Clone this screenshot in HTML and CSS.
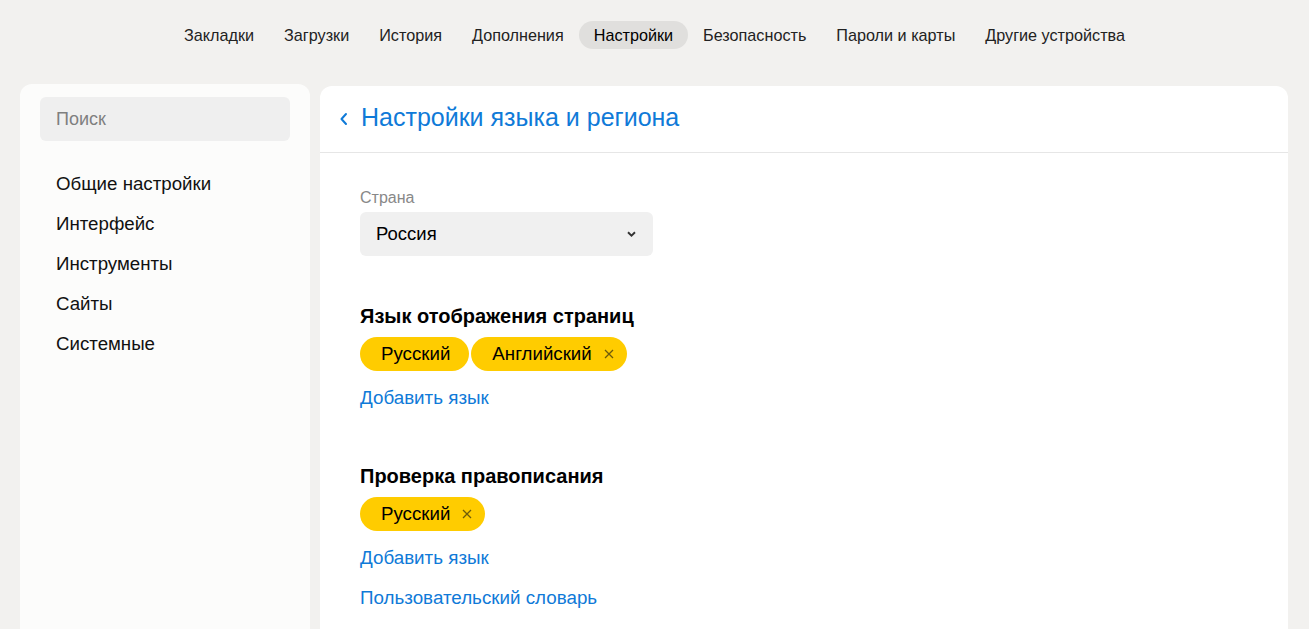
FILE: index.html
```html
<!DOCTYPE html>
<html lang="ru">
<head>
<meta charset="utf-8">
<title>Настройки</title>
<link rel="stylesheet" href="styles.css">
</head>
<body>
<nav class="topnav">
  <a class="tab">Закладки</a>
  <a class="tab">Загрузки</a>
  <a class="tab">История</a>
  <a class="tab">Дополнения</a>
  <a class="tab active">Настройки</a>
  <a class="tab">Безопасность</a>
  <a class="tab">Пароли и карты</a>
  <a class="tab">Другие устройства</a>
</nav>
<div class="layout">
  <aside class="sidebar">
    <div class="search">Поиск</div>
    <ul class="menu">
      <li>Общие настройки</li>
      <li>Интерфейс</li>
      <li>Инструменты</li>
      <li>Сайты</li>
      <li>Системные</li>
    </ul>
  </aside>
  <main class="panel">
    <header class="panel-head">
      <svg class="back" width="10" height="14" viewBox="0 0 10 14"><path d="M7 2 L2.5 7 L7 12" fill="none" stroke="#0f7ad8" stroke-width="2" stroke-linecap="round" stroke-linejoin="round"/></svg>
      <h1>Настройки языка и региона</h1>
    </header>
    <div class="panel-body">
      <div class="field-label">Страна</div>
      <div class="select">
        <span>Россия</span>
        <svg width="11" height="8" viewBox="0 0 11 8"><path d="M2 2.2 L5.5 5.6 L9 2.2" fill="none" stroke="#333" stroke-width="1.9" stroke-linecap="butt" stroke-linejoin="miter"/></svg>
      </div>

      <section class="group">
        <h2>Язык отображения страниц</h2>
        <div class="chips">
          <span class="chip">Русский</span>
          <span class="chip">Английский<svg class="x" width="10" height="10" viewBox="0 0 10 10"><path d="M1 1 L9 9 M9 1 L1 9" stroke="#6e5b0a" stroke-width="1.3" fill="none"/></svg></span>
        </div>
        <a class="link">Добавить язык</a>
      </section>

      <section class="group">
        <h2>Проверка правописания</h2>
        <div class="chips">
          <span class="chip">Русский<svg class="x" width="10" height="10" viewBox="0 0 10 10"><path d="M1 1 L9 9 M9 1 L1 9" stroke="#6e5b0a" stroke-width="1.3" fill="none"/></svg></span>
        </div>
        <a class="link">Добавить язык</a>
        <a class="link">Пользовательский словарь</a>
      </section>
    </div>
  </main>
</div>
</body>
</html>
```
FILE: styles.css
```css
* { box-sizing: border-box; }
html, body { margin: 0; padding: 0; }
body {
  background: #f2f1ef;
  font-family: "Liberation Sans", Arial, sans-serif;
  color: #000;
  height: 629px;
  overflow: hidden;
}
.topnav {
  display: flex;
  justify-content: center;
  gap: 0;
  padding-top: 21px;
  height: 84px;
}
.tab {
  font-size: 16.2px;
  line-height: 28px;
  height: 28px;
  padding: 0 15px;
  color: #222;
  border-radius: 14px;
}
.tab.active { background: #e0dfdd; color: #000; }
.layout {
  display: flex;
  gap: 10px;
  padding: 0 21px 0 20px;
}
.sidebar {
  width: 290px;
  flex: none;
  background: #fcfcfb;
  border-radius: 12px 12px 0 0;
  padding: 13px 20px 0;
  height: 545px;
}
.search {
  height: 44px;
  background: #efefef;
  border-radius: 6px;
  font-size: 18px;
  color: #7f7f7f;
  padding-left: 16px;
  line-height: 44px;
}
.menu {
  list-style: none;
  margin: 23px 0 0;
  padding: 0 0 0 16px;
}
.menu li {
  font-size: 18.7px;
  line-height: 40px;
  color: #111;
}
.panel {
  flex: 1;
  background: #fff;
  border-radius: 12px 12px 0 0;
  margin-top: 2px;
  height: 543px;
}
.panel-head {
  height: 67px;
  border-bottom: 1px solid #e6e6e6;
  display: flex;
  align-items: center;
  padding-left: 19px;
  gap: 12px;
}
.panel-head h1 {
  margin: 0;
  font-weight: 400;
  font-size: 25px;
  color: #0f7ad8;
  padding-bottom: 3px;
}
.panel-body { padding: 35px 40px 0; }
.field-label {
  font-size: 16px;
  color: #888;
  line-height: 20px;
  margin-bottom: 4px;
}
.select {
  width: 293px;
  height: 44px;
  background: #f0f0f0;
  border-radius: 6px;
  display: flex;
  align-items: center;
  justify-content: space-between;
  padding: 0 16px;
  font-size: 18.5px;
}
.group { margin-top: 48px; }
.group + .group { margin-top: 46px; }
.group h2 {
  margin: 0 0 9px;
  font-size: 20px;
  font-weight: 700;
  line-height: 24px;
}
.chips { display: flex; gap: 2px; margin-bottom: 7px; }
.chip {
  background: #ffcc00;
  border-radius: 17px;
  height: 34px;
  line-height: 34px;
  padding: 0 19px 0 21px;
  font-size: 18.7px;
  display: inline-flex;
  align-items: center;
}
.chip .x {
  margin-left: 12px;
  margin-right: -6px;
  flex: none;
}
.link {
  display: block;
  color: #0f7ad8;
  font-size: 18.8px;
  line-height: 40px;
}
```
